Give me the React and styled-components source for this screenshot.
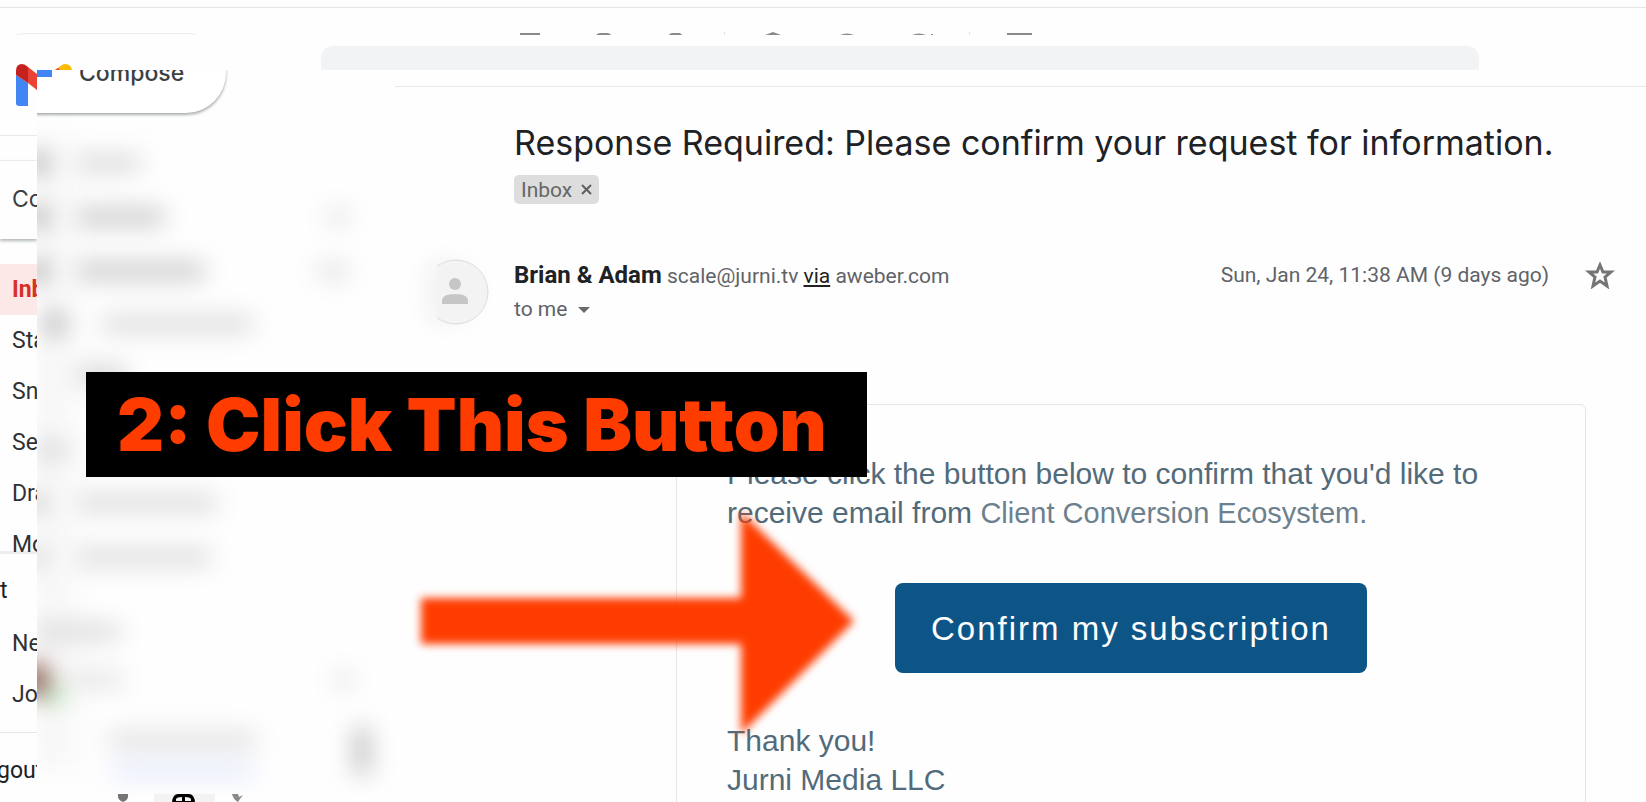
import React from 'react';
import styled, {createGlobalStyle} from 'styled-components';

const folders = ['Sta', 'Sn', 'Se', 'Dra']

// smudges of the hidden navigation, one entry per row
const hiddenRows = [
    {height: 54, items: [{x: -10, w: 20, h: 16, c: '#8a8a8a'}, {x: 40, w: 64, h: 16, c: '#d6d6d6'}]},
    {height: 54, items: [{x: -10, w: 20, h: 16, c: '#8a8a8a'}, {x: 40, w: 88, h: 16, c: '#c4c4c4'}, {x: 290, w: 22, h: 14, c: '#dcdcdc'}]},
    {height: 53, items: [{x: -10, w: 20, h: 16, c: '#8a8a8a'}, {x: 40, w: 128, h: 16, c: '#c4c4c4'}, {x: 280, w: 32, h: 14, c: '#dcdcdc'}]},
    {height: 53, items: [{x: 8, w: 20, h: 20, c: '#a8a8a8'}, {x: 64, w: 152, h: 16, c: '#d8d8d8'}]},
    {height: 50, items: [{x: 40, w: 50, h: 16, c: '#cccccc'}]},
    {height: 24, items: []},
    {height: 52, items: [{x: -4, w: 36, h: 16, c: '#d4d4d4'}]},
    {height: 54, items: [{x: -10, w: 16, h: 16, c: '#a8a8a8'}, {x: 40, w: 140, h: 16, c: '#d8d8d8'}]},
    {height: 54, items: [{x: -10, w: 16, h: 16, c: '#bbbbbb'}, {x: 40, w: 134, h: 16, c: '#d8d8d8'}]},
    {height: 96, items: [{x: -4, w: 88, h: 16, c: '#d8d8d8'}]},
    {height: 0, items: [
        {x: -16, w: 26, h: 30, c: '#7a4238'},
        {x: 30, w: 56, h: 16, c: '#e2e2e2'},
        {x: 298, w: 16, h: 16, c: '#dcdcdc'},
    ]},
    {height: 30, items: [{x: 8, w: 18, h: 22, c: '#b4e2b4'}]},
    {height: 60, items: [{x: 70, w: 150, h: 18, c: '#e2e2e2'}]},
    {height: 0, items: [{x: 74, w: 144, h: 14, c: '#e2e8fb'}]},
]

const App = () => {
    return (
        <Page>
            <GlobalStyle/>
            <Toolbar>
                <ToolbarLine/>
                <PillTop/>
                <ToolbarIcons/>
            </Toolbar>

            <Shell>
                <Rail/>
                <Workspace>
                    <Header>
                        <LogoTip viewBox="0 0 20 6" aria-hidden="true">
                            <path d="M0 6 L7 1 Q10 -1 14 1 Q17 3 17 6 Z" fill="#fbbc04"/>
                            <path d="M0 6 L3 4 L5 6 Z" fill="#ea4335"/>
                        </LogoTip>
                        <Search aria-label="Search mail"/>
                    </Header>
                    <Columns>
                        <Sidebar/>
                        <Message/>
                    </Columns>
                </Workspace>
            </Shell>

            <Banner>2: Click This Button</Banner>
            <Arrow viewBox="0 0 460 250" aria-hidden="true">
                <path d="M16 93 H336 V7 L449 116 L336 229 V139 H16 Z" fill="#ff3c00"/>
            </Arrow>
        </Page>
    );
};

export default App;

const ToolbarIcons = () => (
    <ToolbarSvg viewBox="0 0 560 3" aria-hidden="true">
        <g fill="#8a8a8a">
            <rect x="20" y="1" width="20" height="2"/>
            <path d="M96 3 Q98 1 100 1 H107 Q110 1 111 3 Z"/>
            <path d="M169 3 Q170 1 172 1 H179 Q181 1 182 3 Z"/>
            <path d="M265 3 L273 0 L281 3 Z"/>
            <path d="M340 3 Q347 0 354 3 Z"/>
            <path d="M412 3 Q419 0 426 3 Z"/>
            <rect x="431" y="2" width="2" height="1"/>
            <rect x="507" y="1" width="25" height="2"/>
        </g>
        <g fill="#e4e4e4">
            <rect x="224" width="1" height="3"/>
            <rect x="469" width="1" height="3"/>
        </g>
    </ToolbarSvg>
)

const Rail = () => (
    <RailBox>
        <RailLogo viewBox="0 0 37 42" aria-hidden="true">
            <path d="M16 11 L28 19 V42 H19 Q16 42 16 39 Z" fill="#4285f4"/>
            <path d="M28 3 L37 10 V26 L28 19 Z" fill="#ea4335"/>
            <path d="M16 7 Q16 0 22 0 Q25 0 28 3 V19 L16 11 Z" fill="#c5221f"/>
        </RailLogo>
        <RailRule/>
        <RailCompose>Co</RailCompose>
        <RailLink href="#inbox" $active>Inb</RailLink>
        {folders.map(name => <RailLink key={name} href="#folder">{name}</RailLink>)}
        <RailLink href="#more" $lined>Mo</RailLink>
        <RailHeading>t</RailHeading>
        <RailLink href="#new">Ne</RailLink>
        <RailLink href="#join">Jo</RailLink>
        <RailFoot>gout</RailFoot>
    </RailBox>
)

const Sidebar = () => (
    <SidebarBox>
        <Clip>
            <LogoFoot/>
            <Compose type="button">Compose</Compose>
            <Haze aria-hidden="true">
                {hiddenRows.map((row, i) => (
                    <HazeRow key={i} $height={row.height}>
                        {row.items.map(s => <Smudge key={s.x} $x={s.x} $w={s.w} $h={s.h} $c={s.c}/>)}
                    </HazeRow>
                ))}
                <HazeThumb/>
            </Haze>
        </Clip>
        <SidebarFoot viewBox="0 0 358 8" aria-hidden="true">
            <rect x="117" width="61" height="8" fill="#f3f3f3"/>
            <path d="M81 0 H91 Q92 6 86 8 Q80 6 81 0 Z" fill="#757575"/>
            <path d="M135 8 Q136 0 141 0 H152 Q157 0 158 8 Z" fill="#000"/>
            <path d="M139 7 V5 Q140 3 145 3 V7 Z M148 3 Q153 3 154 5 V7 H148 Z" fill="#f3f3f3"/>
            <path d="M195 0 H201 L202 3 L206 1 L203 5 L201 8 Q196 5 195 0 Z" fill="#8a8a8a"/>
        </SidebarFoot>
    </SidebarBox>
)

const Message = () => (
    <MessagePane>
        <Subject>Response Required: Please confirm your request for information.</Subject>
        <Label>
            Inbox
            <LabelRemove type="button" aria-label="Remove label">
                <svg width="11" height="11" viewBox="0 0 11 11">
                    <path d="M1 1 L10 10 M10 1 L1 10" stroke="#5f5f5f" strokeWidth="2"/>
                </svg>
            </LabelRemove>
        </Label>
        <SenderRow>
            <Avatar viewBox="0 0 52 66" aria-hidden="true">
                <circle cx="19" cy="33" r="32" fill="#f3f3f3" stroke="#dcdcdc"/>
                <circle cx="18" cy="25" r="6" fill="#c6c6c6"/>
                <path d="M5 45 V42 Q5 35 18 35 Q31 35 31 42 V45 Z" fill="#c6c6c6"/>
            </Avatar>
            <Sender>
                <SenderLine>
                    <strong>Brian &amp; Adam</strong> scale@jurni.tv <a href="#via">via</a> aweber.com
                </SenderLine>
                <Recipient type="button">
                    to me
                    <svg width="12" height="6" viewBox="0 0 12 6"><path d="M0 0 H12 L6 6 Z" fill="#6b6b6b"/></svg>
                </Recipient>
            </Sender>
            <Sent>Sun, Jan 24, 11:38 AM (9 days ago)</Sent>
            <Star type="button" aria-label="Star message">
                <svg width="30" height="28" viewBox="0 0 30 28">
                    <path d="M15 4 L18 11 L26 11 L20 16 L22 25 L15 20 L8 25 L10 16 L4 11 L12 11 Z" fill="none" stroke="#757575" strokeWidth="3"/>
                </svg>
            </Star>
        </SenderRow>
        <Card>
            <p>
                Please click the button below to confirm that you'd like to<br/>
                receive email from <ListName>Client Conversion Ecosystem.</ListName>
            </p>
            <Confirm type="button">Confirm my subscription</Confirm>
            <p>
                Thank you!<br/>
                Jurni Media LLC
            </p>
        </Card>
    </MessagePane>
)

const GlobalStyle = createGlobalStyle`
  * {
    box-sizing: border-box;
  }
  body {
    margin: 0;
    background: #fefefe;
    font-family: Roboto, "Liberation Sans", sans-serif;
  }
  button {
    border: 0;
    padding: 0;
    background: none;
    font: inherit;
    color: inherit;
  }
`
const Page = styled.div`
  position: relative;
  display: flex;
  flex-direction: column;
  height: 100vh;
  overflow: hidden;
`
const Toolbar = styled.div`
  flex: none;
  display: flex;
  align-items: flex-end;
  height: 35px;
  overflow: hidden;
  position: relative;
`
const ToolbarLine = styled.div`
  position: absolute;
  top: 7px;
  left: 0;
  right: 0;
  height: 1px;
  background: #e6e6e6;
`
const PillTop = styled.div`
  align-self: flex-start;
  flex: none;
  width: 239px;
  height: 80px;
  margin: 33px 0 0 -13px;
  border-top: 1px solid #ececec;
  border-radius: 40px;
`
const ToolbarSvg = styled.svg`
  flex: none;
  width: 560px;
  height: 3px;
  margin-left: 274px;
`
const Shell = styled.div`
  flex: 1;
  display: flex;
  min-height: 0;
`
const RailBox = styled.nav`
  flex: none;
  display: flex;
  flex-direction: column;
  width: 37px;
  overflow: hidden;
  color: #3c4043;
  font-size: 23px;
`
const RailLogo = styled.svg`
  flex: none;
  width: 37px;
  height: 42px;
  margin-top: 29px;
`
const RailRule = styled.div`
  flex: none;
  height: 1px;
  margin-top: 29px;
  background: #e8e8e8;
`
const RailCompose = styled.div`
  flex: none;
  height: 79px;
  margin: 24px 0 25px;
  padding-left: 12px;
  border-top: 1px solid #ececec;
  box-shadow: 0 2px 3px #b4b8b8;
  font: 23px/77px Inter, sans-serif;
  white-space: nowrap;
`
const RailLink = styled.a`
  flex: none;
  padding-left: 12px;
  line-height: 51px;
  white-space: nowrap;
  text-decoration: none;
  color: ${({$active}) => $active ? '#d93025' : '#303134'};
  font-weight: ${({$active}) => $active ? 700 : 400};
  background: ${({$active, $lined}) => $active ? '#fce8e6' : $lined ? 'linear-gradient(#eceef0, #eceef0) 0 32px / 100% 3px no-repeat' : 'none'};
`
const RailHeading = styled.div`
  flex: none;
  margin-bottom: 6px;
  line-height: 42px;
  color: #202124;
`
const RailFoot = styled.div`
  flex: none;
  margin-top: 12px;
  padding-top: 12px;
  border-top: 1px solid #e4e6ea;
  line-height: 51px;
  color: #202124;
  text-indent: -3px;
`
const Workspace = styled.div`
  flex: 1;
  display: flex;
  flex-direction: column;
  min-width: 0;
`
const Header = styled.header`
  flex: none;
  display: flex;
  align-items: flex-end;
  height: 35px;
`
const LogoTip = styled.svg`
  flex: none;
  width: 20px;
  height: 6px;
  margin-left: 18px;
`
const Search = styled.input`
  flex: 1;
  min-width: 0;
  height: 24px;
  margin: 0 167px 0 246px;
  border: 0;
  border-radius: 12px 12px 0 0;
  background: #f1f3f4;
`
const Columns = styled.div`
  flex: 1;
  display: flex;
  min-height: 0;
`
const SidebarBox = styled.aside`
  flex: none;
  display: flex;
  flex-direction: column;
  width: 358px;
`
const Clip = styled.div`
  flex: 1;
  min-height: 0;
  overflow: hidden;
  position: relative;
`
const LogoFoot = styled.div`
  position: absolute;
  z-index: 1;
  width: 15px;
  height: 7px;
  background: #4285f4;
`
const Compose = styled.button`
  display: block;
  width: 239px;
  height: 80px;
  margin: -37px 0 0 -50px;
  padding-left: 92px;
  border-radius: 40px;
  background: #fff;
  box-shadow: 0 2px 3px #a8adad;
  font: 500 23px/80px Inter, sans-serif;
  text-align: left;
  color: #3c4043;
`
const Haze = styled.div`
  position: relative;
  margin-top: 23px;
  background: linear-gradient(90deg, #f4f4f4, #fefefe 56px);
  filter: blur(12px);
`
const HazeRow = styled.div`
  position: relative;
  height: ${({$height}) => $height}px;
`
const Smudge = styled.span`
  position: absolute;
  top: 50%;
  left: ${({$x}) => $x}px;
  width: ${({$w}) => $w}px;
  height: ${({$h}) => $h}px;
  transform: translateY(-50%);
  border-radius: 6px;
  background: ${({$c}) => $c};
`
const HazeThumb = styled.span`
  position: absolute;
  bottom: -4px;
  right: 26px;
  width: 14px;
  height: 46px;
  background: #b4b4b4;
`
const SidebarFoot = styled.svg`
  flex: none;
  width: 358px;
  height: 8px;
`
const MessagePane = styled.main`
  flex: 1;
  min-width: 0;
  margin-top: 16px;
  padding: 32px 0 0 119px;
  border-top: 1px solid #e8e8e8;
`
const Subject = styled.h1`
  margin: 0;
  font: 400 34px/48px Inter, sans-serif;
  color: #202124;
  white-space: nowrap;
`
const Label = styled.div`
  display: inline-flex;
  align-items: center;
  gap: 9px;
  height: 29px;
  margin-top: 8px;
  padding: 0 7px;
  border-radius: 5px;
  background: #ddd;
  color: #666;
  font-size: 21px;
`
const LabelRemove = styled.button`
  display: flex;
`
const SenderRow = styled.div`
  display: flex;
  align-items: flex-start;
  margin: 55px 31px 0 -77px;
  font-size: 21px;
  line-height: 33px;
  color: #5f6368;
`
const Avatar = styled.svg`
  flex: none;
  width: 52px;
  height: 66px;
  filter: drop-shadow(-12px 0 10px #f3f3f3);
`
const Sender = styled.div`
  flex: 1;
  margin-left: 25px;
`
const SenderLine = styled.div`
  white-space: nowrap;
  strong {
    font-size: 24px;
    color: #202124;
  }
  a {
    color: #222;
    text-underline-offset: 2px;
  }
`
const Recipient = styled.button`
  display: flex;
  align-items: center;
  gap: 11px;
`
const Sent = styled.time`
  white-space: nowrap;
`
const Star = styled.button`
  display: flex;
  margin: 2px 0 0 36px;
`
const Card = styled.section`
  margin: 78px 60px 0 162px;
  padding: 49px 50px;
  border: 1px solid #e3e7e8;
  border-radius: 6px;
  font: 30px/39px "Liberation Sans", Arial, sans-serif;
  color: #526b7a;
  p {
    margin: 0;
    white-space: nowrap;
  }
`
const ListName = styled.span`
  font-size: 29px;
  color: #6d808d;
`
const Confirm = styled.button`
  display: block;
  height: 90px;
  margin: 50px auto 48px;
  padding: 0 36px;
  border-radius: 8px;
  background: #0e5587;
  color: #fff;
  font-size: 33px;
  letter-spacing: 2px;
`
const Banner = styled.div`
  position: absolute;
  top: 372px;
  left: 86px;
  width: 781px;
  padding-left: 31px;
  background: #000;
  color: #ff3c00;
  font: 900 73px/105px Inter, sans-serif;
  white-space: nowrap;
`
const Arrow = styled.svg`
  position: absolute;
  top: 505px;
  left: 405px;
  width: 460px;
  height: 250px;
  filter: blur(4px);
`
